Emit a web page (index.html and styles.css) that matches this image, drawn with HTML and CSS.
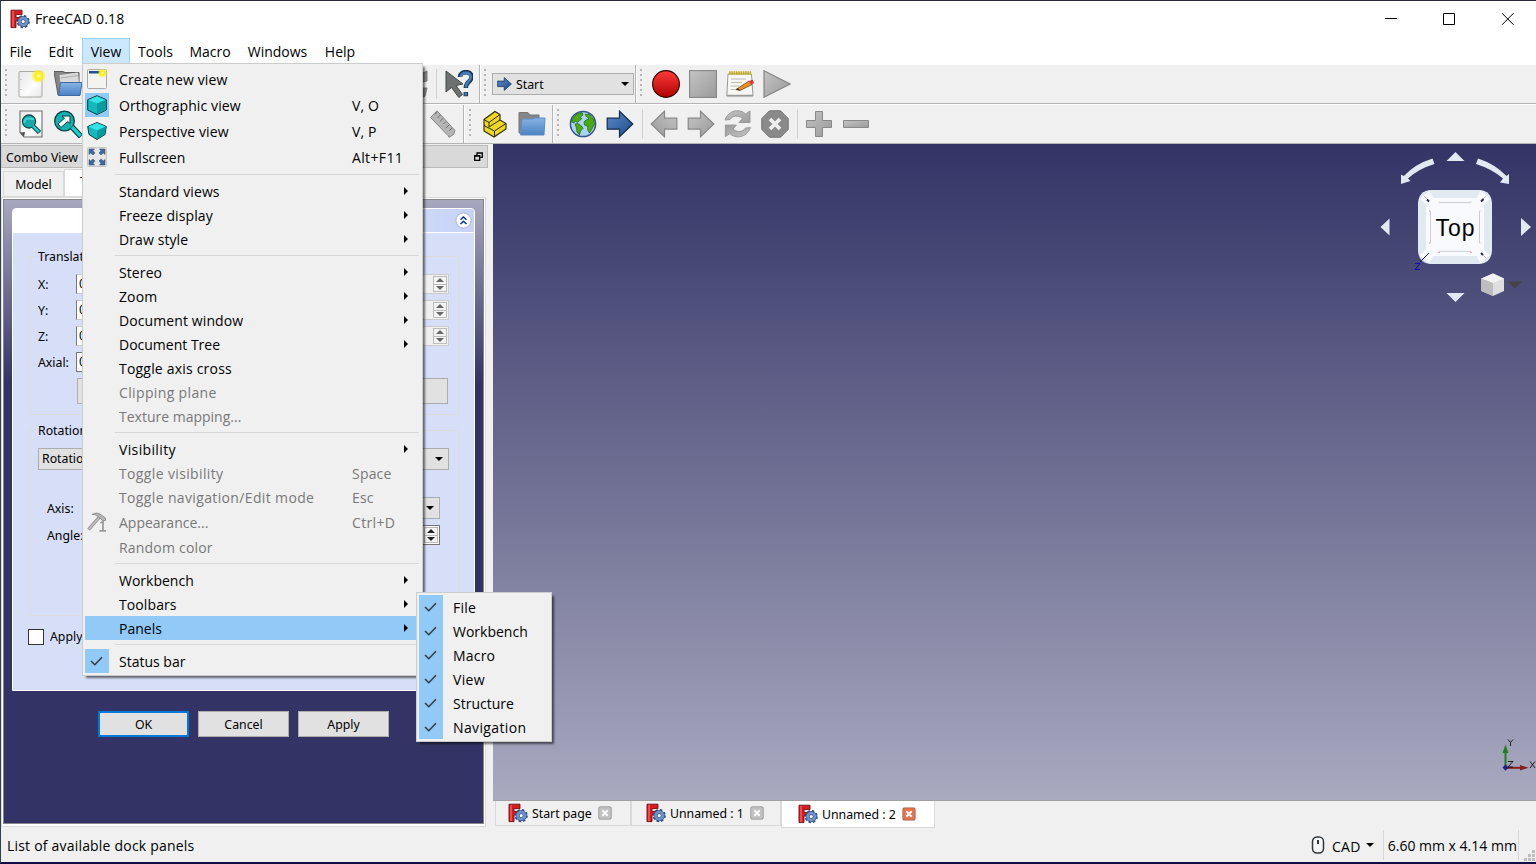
FILE: index.html
```html
<!DOCTYPE html>
<html lang="en">
<head>
<meta charset="utf-8">
<title>FreeCAD 0.18</title>
<link rel="stylesheet" href="styles.css">
</head>
<body>
<svg class="defs" width="0" height="0">
  <defs>
    <linearGradient id="red" x1="0" y1="0" x2="0" y2="1"><stop offset="0" stop-color="#ff3b3b"/><stop offset="1" stop-color="#b00000"/></linearGradient>
    <linearGradient id="grey" x1="0" y1="0" x2="1" y2="1"><stop offset="0" stop-color="#c4c4c4"/><stop offset="1" stop-color="#9a9a9a"/></linearGradient>
    <linearGradient id="blue" x1="0" y1="0" x2="1" y2="1"><stop offset="0" stop-color="#5a8ccb"/><stop offset="1" stop-color="#1d4a87"/></linearGradient>
    <linearGradient id="folder" x1="0" y1="0" x2="0" y2="1"><stop offset="0" stop-color="#87b4e4"/><stop offset="1" stop-color="#4a82c4"/></linearGradient>
    <linearGradient id="paper" x1="0" y1="0" x2="1" y2="1"><stop offset="0" stop-color="#e6e6e6"/><stop offset=".6" stop-color="#fcfcfc"/><stop offset="1" stop-color="#e6e6e6"/></linearGradient>
    <radialGradient id="glow"><stop offset="0" stop-color="#ffffd0"/><stop offset=".35" stop-color="#fcf019"/><stop offset=".6" stop-color="#fcee20" stop-opacity=".85"/><stop offset="1" stop-color="#fcee20" stop-opacity="0"/></radialGradient>
    <symbol id="logo" viewBox="0 0 20 20">
      <path d="M1 1.2H12V5.6H6V8.4H10V12H6V18.6H1Z" fill="#d81c22" stroke="#6a0d10" stroke-width=".9"/>
      <path d="M2 2H4V18H2Z" fill="#f2494c"/>
      <circle cx="13.2" cy="12.6" r="5.4" fill="none" stroke="#2c4a7c" stroke-width="2.4" stroke-dasharray="2.3 1.94"/>
      <circle cx="13.2" cy="12.6" r="3.6" fill="#fff" stroke="#35588f" stroke-width="4"/>
      <circle cx="13.2" cy="12.6" r="3.6" fill="none" stroke="#6d94cc" stroke-width="2.6"/>
    </symbol>
    <symbol id="check" viewBox="0 0 24 24"><path d="M6 12 9.8 15.8 17 8.3" fill="none" stroke="#333b43" stroke-width="1.5"/></symbol>
    <symbol id="close" viewBox="0 0 14 14"><rect x=".7" y=".7" width="12.6" height="12.6" rx="1.5" fill="currentColor" stroke="#000" stroke-opacity=".25"/><path d="M4.3 4.3 9.7 9.7M9.7 4.3 4.3 9.7" stroke="#fff" stroke-width="2"/></symbol>
    <symbol id="arrow" viewBox="0 0 28 28"><path d="M1.2 8.2H13.5V1.2L26.8 14 13.5 26.8V19.2H1.2Z"/></symbol>
  </defs>
</svg>

<div class="window">
  <header class="titlebar">
    <svg class="app-icon" width="20" height="20"><use href="#logo"/></svg>
    <span class="app-title">FreeCAD 0.18</span>
    <svg class="win-controls" width="136" height="20" viewBox="0 0 136 20" fill="none" stroke="#000" stroke-width="1"><path d="M3 9.5H15"/><path d="M61.5 4.5H72.5V15.5H61.5Z"/><path d="M120 4.2 131.6 15.8M131.6 4.2 120 15.8"/></svg>
  </header>

  <nav class="menubar">
    <span class="mb mb-file">File</span><span class="mb mb-edit">Edit</span><span class="mb mb-view open">View</span><span class="mb mb-tools">Tools</span><span class="mb mb-macro">Macro</span><span class="mb mb-windows">Windows</span><span class="mb mb-help">Help</span>
  </nav>

  <div class="toolbar">
    <section class="tb tb-file">
      <i class="handle"></i>
      <svg class="tool" viewBox="0 0 28 28"><rect x="2" y="1.5" width="23" height="25.5" rx="1" fill="url(#paper)" stroke="#aaa9a4"/><path d="M4 9v1M4 19v1" stroke="#999"/><circle cx="21.5" cy="6" r="7.5" fill="url(#glow)"/></svg>
      <svg class="tool" viewBox="0 0 28 28"><path d="M0 1.5H9L11 2.500H25V20L6 25H4Z" fill="#868686" stroke="#5d5d5d"/><path d="M5.500 5 24 2.500 25 14 7 18Z" fill="#dadada"/><path d="M7 8 24 5.500" stroke="#aaa"/><path d="M6.500 12.500H28L26 25.500H4.500Z" fill="url(#folder)" stroke="#3c6ba5"/></svg>
      <span class="grow"></span>
      <svg class="tool refresh-edge" viewBox="0 0 28 28"><path d="M23 3 27 1V11L22 12ZM22 18H27L25 26 22 28Z" fill="#909090" stroke="#777"/></svg>
      <i class="sep"></i>
      <svg class="tool" viewBox="0 0 28 28"><path d="M1 1V22L6.500 17.500 13.800 27.500 17.500 24.500 11 15.500 18 14Z" fill="#6d7270" stroke="#444947"/><path d="M15 7C15 .5 27 .5 26.500 7 26.300 12 21 11.500 20.800 18M20.800 22V26.300" fill="none" stroke="#173453" stroke-width="4.500"/><path d="M15.600 7C16 1.500 26 1.500 25.800 7 25.500 11.500 21 11.500 20.800 17.500M20.800 22.600V25.600" fill="none" stroke="#477bb5" stroke-width="2.600"/></svg>
    </section>
    <section class="tb tb-bench">
      <i class="handle"></i>
      <div class="bench"><svg width="15" height="14" viewBox="0 0 28 28" preserveAspectRatio="none" fill="url(#blue)" stroke="#173453" stroke-width="1.5"><use href="#arrow"/></svg><span>Start</span><i class="down"></i></div>
    </section>
    <section class="tb tb-macro">
      <i class="handle"></i>
      <svg class="tool" viewBox="0 0 28 28"><circle cx="14" cy="14" r="13.4" fill="url(#red)" stroke="#280000" stroke-width="1.1"/></svg>
      <svg class="tool" viewBox="0 0 28 28"><rect x=".6" y=".6" width="26.8" height="26.8" fill="url(#grey)" stroke="#858585" stroke-width="1.1"/></svg>
      <svg class="tool" viewBox="0 0 28 28"><path d="M2 4H25.5L27 26H.8Z" fill="#f7f7f5" stroke="#999"/><path d="M1 25.5H27" stroke="#999" stroke-width="1.500"/><path d="M3 3H25" stroke="#c6a912" stroke-width="3.500" stroke-dasharray="1.6 .7"/><path d="M5 9H20M5 12.500H16M4.500 16H13M4.500 19.500H11" stroke="#bbb"/><path d="M10 19.500 23 11 26 14.500 14 20.500Z" fill="#e8912c" stroke="#78400c" stroke-width=".8"/><path d="M23 11 26.500 9.700 28 13 25.500 14.500Z" fill="#e53030"/><path d="M10 19.500 12 18 14 20.500Z" fill="#333"/></svg>
      <svg class="tool" viewBox="0 0 28 28"><path d="M1 .8V27.2L27 14Z" fill="url(#grey)" stroke="#858585" stroke-width="1.2"/></svg>
    </section>
  </div>

  <div class="toolbar">
    <section class="tb tb-view">
      <i class="handle"></i>
      <svg class="tool" viewBox="0 0 28 28"><path d="M3 1H25V27H7L3 22.5Z" fill="url(#paper)" stroke="#70736f" stroke-width="1.100"/><path d="M3 22.500 8 22 7 27Z" fill="#555"/><path d="M16 16 22.500 22.500" stroke="#042a2a" stroke-width="4.500"/><circle cx="12" cy="11.500" r="6.600" fill="#16a9ab" stroke="#063d3e" stroke-width="1.100"/><path d="M16 16 22 22" stroke="#16d0d2" stroke-width="2.600"/><path d="M7 13C9 5 14 10 17 9" stroke="#6ff" opacity=".5" fill="none" stroke-width="2"/></svg>
      <svg class="tool" viewBox="0 0 28 28"><path d="M18 17 27 26.500" stroke="#042a2a" stroke-width="5.500"/><circle cx="10.500" cy="11" r="9.800" fill="#16b0b2" stroke="#063d3e" stroke-width="1.300"/><path d="M18 17 26.600 26" stroke="#16d0d2" stroke-width="3.500"/><path d="M4 14 10.500 8.200 8 6H16V13.500L13.600 11.500 7 17.500Z" fill="#f4ffff" stroke="#063d3e"/></svg>
      <span class="grow"></span>
      <svg class="tool ruler" viewBox="0 0 28 28"><path d="M1.500 7.500 8 .8 26 20.500 24.500 24.500 20 27.300 19 25.500Z" fill="#b5b5b5" stroke="#858585"/><path d="M8.200 2 5.800 4.500M11.200 5.200 8.500 8M14 8.500 10.800 11.500M17 11.500 14.500 14M20 15 16.800 18M23 18 20 21" stroke="#6f6f6f"/></svg>
    </section>
    <section class="tb tb-part">
      <i class="handle"></i>
      <svg class="tool" viewBox="0 0 28 28"><path d="M3 9.500 14 1.500 19 4.500V10L25 13.500V19L13 27 3 21Z" fill="#ecd721" stroke="#2d2800" stroke-width="1.100"/><path d="M3 9.500 8 12.500 19 4.500M8 12.500V17M3 15.500 13.500 21 25 13.500M13.500 21V27M8 17 19 10" fill="none" stroke="#2d2800" stroke-width="1"/></svg>
      <svg class="tool" viewBox="0 0 28 28"><path d="M1 2.500H10L12 5H21V23H1Z" fill="#858585" stroke="#777"/><path d="M4 9H15L17 8H27L26 25H2.500Z" fill="url(#folder)" stroke="#5c8cc9"/></svg>
    </section>
    <section class="tb tb-nav">
      <i class="handle"></i>
      <svg class="tool" viewBox="0 0 28 28"><circle cx="14" cy="14" r="12.600" fill="#a9d2fb" stroke="#34558b" stroke-width="1.500"/><path d="M4 8 8 4 13 2.500 14 5 11.500 7 12.500 9 10 11 8.500 12.500 6 11 5 13 2.500 12ZM6 14 9 13.500 13 16.500 14 18.500 11.500 21 10.500 25 8 22 7.500 18ZM16 4.500 20 4 24.500 9 25.500 14 23.500 18 20.500 23 18.500 19.500 19 16.500 15.500 15 15 12 17 10 20 9 18 7Z" fill="#4aab12" stroke="#246205" stroke-width=".7"/></svg>
      <svg class="tool" viewBox="0 0 28 28" fill="url(#blue)" stroke="#122c4a" stroke-width="1.2"><use href="#arrow"/></svg>
      <i class="sep"></i>
      <svg class="tool" viewBox="0 0 28 28" fill="url(#grey)" stroke="#888" stroke-width="1.2"><g transform="translate(28 0) scale(-1 1)"><use href="#arrow" width="28" height="28"/></g></svg>
      <svg class="tool" viewBox="0 0 28 28" fill="url(#grey)" stroke="#888" stroke-width="1.2"><use href="#arrow"/></svg>
      <svg class="tool" viewBox="0 0 28 28"><path id="rl" d="M1 10C5-1 17-1 21.500 4L26 1V12.500H15L18.500 8.500C14 4.500 8 6 6 9.500Z" fill="url(#grey)" stroke="#999"/><use href="#rl" transform="rotate(180 13.7 13.8)"/></svg>
      <svg class="tool" viewBox="0 0 28 28"><path d="M8.500.8H19.500L27.200 8.500V19.500L19.500 27.200H8.500L.8 19.500V8.500Z" fill="#8a8a8a" stroke="#737373"/><path d="M9 9 19 19M19 9 9 19" stroke="#eee" stroke-width="3.800"/></svg>
      <i class="sep"></i>
      <svg class="tool" viewBox="0 0 28 28"><path d="M10.500 1.500H17.500V10.500H26.500V17.500H17.500V26.500H10.500V17.500H1.500V10.500H10.500Z" fill="url(#grey)" stroke="#888"/></svg>
      <svg class="tool" viewBox="0 0 28 28"><path d="M1.500 10.500H26.500V17.500H1.500Z" fill="url(#grey)" stroke="#888"/></svg>
    </section>
  </div>

  <main class="main">
    <aside class="dock">
      <div class="dock-title"><span>Combo View</span><svg width="9" height="9" viewBox="0 0 9 9"><path d="M3 3V.8H8.300V5.300H6M3 1H8.500M.7 3.600H5.700V8.300H.7ZM.5 4.200H6" fill="none" stroke="#000" stroke-width="1.300"/></svg></div>
      <div class="dock-tabs"><span class="dtab">Model</span><span class="dtab active">Tasks</span></div>
      <div class="pane">
        <div class="task">
          <div class="task-head"><svg width="17" height="17" viewBox="0 0 17 17"><circle cx="8.500" cy="8.500" r="7.600" fill="#fff" stroke="#aab3d2"/><path d="M5.500 7.800 8.500 5 11.500 7.800M5.500 12 8.500 9.200 11.500 12" fill="none" stroke="#00339a" stroke-width="1.500"/></svg></div>
          <div class="task-body">
            <div class="frame translation">
              <span class="legend">Translat</span>
              <div class="row"><label>X:</label><span class="spin off">0<i></i></span></div>
              <div class="row"><label>Y:</label><span class="spin off">0<i></i></span></div>
              <div class="row"><label>Z:</label><span class="spin off">0<i></i></span></div>
              <div class="row"><label>Axial:</label><span class="spin short">0</span></div>
              <div class="wide-btn"></div>
            </div>
            <div class="frame rotation">
              <span class="legend">Rotation</span>
              <div class="combo method">Rotatio<i class="down"></i></div>
              <div class="row axis"><label>Axis:</label><span class="combo"><i class="down"></i></span></div>
              <div class="row angle"><label>Angle:</label><span class="spin"><i></i></span></div>
            </div>
            <div class="apply-row"><span class="checkbox"></span>Apply</div>
          </div>
        </div>
        <div class="buttons"><span class="btn ok">OK</span><span class="btn">Cancel</span><span class="btn">Apply</span></div>
      </div>
    </aside>

    <div class="mdi">
      <div class="viewport">
        <svg class="navcube" width="166" height="166" viewBox="1370 144 166 166">
          <g fill="#e1e9f1">
            <path d="M1446.500 161 1455.500 152 1464.500 161ZM1446.500 293 1455.500 302 1464.500 293ZM1389.500 218.500V235.500L1380.500 227ZM1521 218V236L1531 227Z"/>
            <path d="M1432.500 158.500 1434.500 164Q1418 169 1408 178.500L1410.500 181 1401 184 1401 174.500 1403.800 176Q1415 164 1432.500 158.500Z"/>
            <path d="M1478 158.500 1476 164Q1492 169 1503 178.500L1500 182.500 1509 184 1509 174 1506.500 176Q1495 164 1478 158.500Z"/>
            <path d="M1430 190H1480Q1491 191 1492 203V251Q1491 263 1480 264H1430Q1419 263 1418 251V203Q1419 191 1430 190Z"/>
          </g>
          <path d="M1432 198H1479L1484 204V250L1479 256H1432L1426 250V204Z" fill="#f8fafd"/>
          <path d="M1420 199 1429 190.500 1433 197 1426 204ZM1490 199 1481 190.500 1477 197 1484 204ZM1420 255 1429 263.500 1433 257 1426 250ZM1490 255 1481 263.500 1477 257 1484 250Z" fill="#fbfcfe"/>
          <path d="M1424 196 1428 200M1486 196 1482 200M1482 254 1486.500 258.500" stroke="#b9b9d0"/>
          <path d="M1427 199.500 1429 201.500M1483.500 199 1481 201.500M1481 253 1483 255" stroke="#2b2b60" stroke-width="2"/>
          <path d="M1439 201.500V202.500H1471V201.500M1439 252V251.300H1471V252M1429.500 211H1430.500V243H1429.500M1480.500 211H1479.500V243H1480.500" fill="none" stroke="#cbcbd9"/>
          <path d="M1438 252.500H1440M1470 252.500H1472" stroke="#f8aaaa"/><path d="M1429.500 210V212M1429.500 242V244" stroke="#aee5ae"/>
          <path d="M1429 253 1420 262M1415 263.500H1420L1415 269.500H1420" fill="none" stroke="#0e0e9e"/>
          <text x="1455" y="236" class="cube-text" text-anchor="middle" textLength="39">Top</text>
          <path d="M1493 273.500 1504 278.500V291L1493 296 1481.300 291V278.500Z" fill="#dedede"/><path d="M1493 273.500 1504 278.500 1493 283 1481.300 278.500Z" fill="#f2f2f2"/><path d="M1481.300 278.500 1493 283V296L1481.300 291Z" fill="#bdbdbd"/>
          <path d="M1508 281.500H1522L1515 288.500Z" fill="#444"/>
        </svg>
        <svg class="axes" width="46" height="40" viewBox="1490 735 46 40">
          <path d="M1505.500 767V752" stroke="#1d821d" stroke-width="2"/><path d="M1505.500 744.500 1508.500 753H1502.500Z" fill="#1d821d"/>
          <path d="M1506 767.800H1522" stroke="#862020" stroke-width="2"/><path d="M1528.500 767.800 1520 765V770.500Z" fill="#862020"/>
          <path d="M1505.500 764.500 1508.500 767.500 1505.500 770.700 1502.500 767.500Z" fill="#20208a"/>
          <path d="M1508 739.500 1510.500 742.500 1513 739.500M1510.500 742.500V746M1508 761.500H1513L1508 767H1513M1530 761.500 1535 768M1535 761.500 1530 768" fill="none" stroke="#111" stroke-width=".9"/>
        </svg>
      </div>
      <div class="doc-tabs">
        <div class="doc start"><svg width="20" height="20"><use href="#logo"/></svg><span class="dt">Start page</span><svg class="x" width="14" height="14"><use href="#close"/></svg></div>
        <div class="doc one"><svg width="20" height="20"><use href="#logo"/></svg><span class="dt">Unnamed : 1</span><svg class="x" width="14" height="14"><use href="#close"/></svg></div>
        <div class="doc two active"><svg width="20" height="20"><use href="#logo"/></svg><span class="dt">Unnamed : 2</span><svg class="x" width="14" height="14"><use href="#close"/></svg></div>
      </div>
    </div>
  </main>

  <footer class="status">
    <span class="status-msg">List of available dock panels</span>
    <svg width="14" height="18" viewBox="0 0 14 18"><rect x="1.500" y="1" width="11" height="16" rx="4.500" fill="#f6f6f6" stroke="#30363b" stroke-width="1.500"/><path d="M7 4V8" stroke="#30363b" stroke-width="2"/></svg>
    <span class="cad">CAD</span><i class="down"></i>
    <span class="dims">6.60 mm x 4.14 mm</span>
    <svg class="grip" width="12" height="12" viewBox="0 0 12 12" fill="#bdbdbd"><path d="M8 0h3v3H8zM4 4h3v3H4zM8 4h3v3H8zM0 8h3v3H0zM4 8h3v3H4zM8 8h3v3H8z"/></svg>
  </footer>
</div>

<div class="menu view-menu">
  <div class="mi tall"><span class="ic"><svg width="20" height="20" viewBox="0 0 20 20"><rect x=".5" y=".5" width="19" height="19" rx="1" fill="#f3f3ef" stroke="#aaa"/><path d="M2 2H18V4.500H2Z" fill="#234f8f"/><circle cx="15.500" cy="4" r="5" fill="url(#glow)"/></svg></span><span class="lb">Create new view</span></div>
  <div class="mi tall"><span class="ic on"><svg width="20" height="20" viewBox="0 0 20 20"><path d="M10 .7 19.300 4.700V15L10 19.500.7 15V4.700Z" fill="#15b9bc" stroke="#063d40"/><path d="M10 1.200 18.500 4.900 10 8.500 1.500 4.900Z" fill="#34e3e5"/><path d="M10 8.500 19 4.900V15L10 19Z" fill="#0e9b9e"/></svg></span><span class="lb">Orthographic view</span><span class="sc">V, O</span></div>
  <div class="mi tall"><span class="ic"><svg width="20" height="20" viewBox="0 0 20 20"><path d="M10 1.500 19.300 5.500 18 13.500 10 18.500 2 13.500.7 5.500Z" fill="#15b9bc" stroke="#063d40"/><path d="M10 2 18.500 5.600 10 9.500 1.500 5.600Z" fill="#34e3e5"/><path d="M10 9.500 18.800 5.800 17.600 13.300 10 18Z" fill="#0e9b9e"/></svg></span><span class="lb">Perspective view</span><span class="sc">V, P</span></div>
  <div class="mi tall"><span class="ic"><svg width="20" height="20" viewBox="0 0 20 20"><rect x=".5" y=".5" width="19" height="19" rx="1" fill="#e6e6e6" stroke="#c5c5c5"/><g fill="#41699e" stroke="#2a4870" stroke-width=".5"><path id="fa" d="M2 2H7.500L6 3.800 8 6 6 8 3.800 6 2 7.500Z"/><use href="#fa" transform="translate(20 0) scale(-1 1)"/><use href="#fa" transform="translate(0 20) scale(1 -1)"/><use href="#fa" transform="translate(20 20) scale(-1 -1)"/></g></svg></span><span class="lb snug">Fullscreen</span><span class="sc wide">Alt+F11</span></div>
  <hr>
  <div class="mi sub"><span class="lb">Standard views</span></div>
  <div class="mi sub"><span class="lb">Freeze display</span></div>
  <div class="mi sub"><span class="lb">Draw style</span></div>
  <hr>
  <div class="mi sub"><span class="lb">Stereo</span></div>
  <div class="mi sub"><span class="lb">Zoom</span></div>
  <div class="mi sub"><span class="lb">Document window</span></div>
  <div class="mi sub"><span class="lb snug">Document Tree</span></div>
  <div class="mi"><span class="lb mid">Toggle axis cross</span></div>
  <div class="mi off"><span class="lb wide">Clipping plane</span></div>
  <div class="mi off"><span class="lb snug">Texture mapping...</span></div>
  <hr>
  <div class="mi sub"><span class="lb wide">Visibility</span></div>
  <div class="mi off"><span class="lb wide">Toggle visibility</span><span class="sc mid">Space</span></div>
  <div class="mi off"><span class="lb wide">Toggle navigation/Edit mode</span><span class="sc">Esc</span></div>
  <div class="mi tall off"><span class="ic"><svg width="20" height="20" viewBox="0 0 20 20" fill="none"><path d="M1.500 17.500 12.500 5" stroke="#888" stroke-width="3.400"/><path d="M1.800 17.200 12.300 5.300" stroke="#bcbcbc" stroke-width="2"/><path d="M5 2.500Q10-.5 14 2.800L18.500 6V8.500L15.500 8.500 11 4.200Q8 2 5 2.500Z" fill="#b5b5b5" stroke="#858585" stroke-width=".8"/><path d="M13.500 11 16 9.500V18.500M12.500 18.800H19" stroke="#999" stroke-width="1.700"/></svg></span><span class="lb snug">Appearance...</span><span class="sc wide">Ctrl+D</span></div>
  <div class="mi off"><span class="lb mid">Random color</span></div>
  <hr>
  <div class="mi sub"><span class="lb snug">Workbench</span></div>
  <div class="mi sub"><span class="lb">Toolbars</span></div>
  <div class="mi sub hover"><span class="lb snug">Panels</span></div>
  <hr>
  <div class="mi"><span class="ic on"><svg width="24" height="24"><use href="#check"/></svg></span><span class="lb snug">Status bar</span></div>
</div>

<div class="menu panels-menu">
  <div class="mi"><span class="ic on"><svg width="24" height="24"><use href="#check"/></svg></span><span class="lb mid">File</span></div>
  <div class="mi"><span class="ic on"><svg width="24" height="24"><use href="#check"/></svg></span><span class="lb snug">Workbench</span></div>
  <div class="mi"><span class="ic on"><svg width="24" height="24"><use href="#check"/></svg></span><span class="lb mid">Macro</span></div>
  <div class="mi"><span class="ic on"><svg width="24" height="24"><use href="#check"/></svg></span><span class="lb wide">View</span></div>
  <div class="mi"><span class="ic on"><svg width="24" height="24"><use href="#check"/></svg></span><span class="lb snug">Structure</span></div>
  <div class="mi"><span class="ic on"><svg width="24" height="24"><use href="#check"/></svg></span><span class="lb wide">Navigation</span></div>
</div>
</body>
</html>
```
FILE: styles.css
```css
* { box-sizing: border-box; }
body { margin: 0; width: 1536px; height: 864px; overflow: hidden; position: relative; font-family: "Open Sans", "Noto Sans", sans-serif; font-size: 14px; color: #000; white-space: nowrap; }
svg { display: block; flex: none; }
.defs { position: absolute; }
.window { width: 1536px; height: 864px; background: #f0f0f0; border-left: 1px solid #2f4052; border-top: 1px solid #2b2a36; border-bottom: 2px solid #130c42; display: flex; flex-direction: column; }

.titlebar { height: 37px; background: #fff; display: flex; align-items: center; padding: 0 18px 2px 9px; }
.app-title { margin-left: 5px; font-size: 14px; letter-spacing: .12px; }
.win-controls { margin-left: auto; }
.menubar { height: 26px; background: #fff; display: flex; line-height: 28px; }
.mb { height: 26px; text-align: center; }
.mb-file { width: 39px; }
.mb-edit { width: 42px; }
.mb-view { width: 48px; }
.mb-tools { width: 51px; }
.mb-macro { width: 58px; }
.mb-windows { width: 77px; }
.mb-help { width: 48px; }
.open { background: #cce8ff; border: 1px solid #99d1ff; line-height: 26px; }

.toolbar { height: 40px; flex: none; display: flex; border-top: 1px solid #fdfdfd; border-bottom: 1px solid #b4b4b4; }
.tb { display: flex; align-items: center; gap: 9px; border-right: 1px solid #b4b4b4; border-left: 1px solid #fff; }
.tb:last-child { border-right: 0; }
.tool { width: 28px; height: 28px; }
.handle { width: 3px; height: 30px; flex: none; background: radial-gradient(circle at 1px 1px, #b5b5b5 1.1px, transparent 1.2px) 0 0 / 3px 5px; }
.sep { width: 1px; height: 30px; background: #d0d0d0; margin: 0 -1px; }
.tb-nav .sep { margin: 0 -2px 0 -1px; }
.grow { flex: 1; }
.tb-file { width: 479px; padding: 0 6px 0 3px; }
.tb-bench { width: 156px; padding: 0 1px 0 3px; gap: 5px; }
.tb-macro { padding-left: 3px; }
.tb-view { width: 463px; padding: 0 6px 0 3px; }
.tb-part { width: 89px; padding-left: 4px; gap: 9px; }
.tb-nav { padding-left: 3px; }
.bench { width: 142px; height: 22px; border: 1px solid #adadad; background: #e1e1e1; display: flex; align-items: center; padding: 0 4px; font: 12.3px/20px "Noto Sans", sans-serif; }
.bench span { margin: 1px 0 0 4px; }
.down { width: 0; height: 0; border: 4px solid transparent; border-top-color: #000; border-bottom: 0; margin-left: auto; flex: none; }

.main { flex: 1; min-height: 0; display: flex; font: 12.3px/20px "Noto Sans", sans-serif; }
.dock { width: 492px; padding: 1px 5px 0 0; }
.dock-title { height: 23px; background: #d9d9d9; border: 1px solid #b9b9b9; border-left-color: #ccc; display: flex; align-items: center; justify-content: space-between; padding: 0 4px; }
.dock-title span { margin-top: 2px; }
.dock-tabs { display: flex; align-items: flex-end; height: 29px; padding-left: 2px; }
.dtab { width: 61px; height: 26px; border: 1px solid #d9d9d9; background: #f0f0f0; text-align: center; line-height: 26px; }
.dtab.active { width: 66px; height: 28px; background: #fff; line-height: 23px; text-align: left; padding-left: 15px; }
.pane { width: 485px; height: 630px; border: 1px solid #dcdcdc; background: linear-gradient(#a9a9c0, #333366 185px); padding: 10px; box-shadow: inset 0 0 0 1px #fff, inset 0 -2px 0 #fff, inset 0 0 0 2px #85858d, inset 0 -3px 0 #85858d; }
.task { width: 463px; height: 483px; border: 1px solid #fff; border-radius: 4px 4px 0 0; background: #d6dff7; }
.task-head { height: 24px; border-bottom: 1px solid #fff; border-radius: 3px 3px 0 0; background: linear-gradient(90deg, #fff, #fff 12%, #c6d3f7); display: flex; align-items: center; justify-content: flex-end; padding-right: 2px; }
.task-body { padding: 23px 15px 0; }
.frame { border: 1px solid #dcdcdc; width: 431px; padding: 0 9px; }
.translation { height: 159px; }
.legend { display: block; width: max-content; height: 18px; line-height: 18px; margin: -9px 0 0 -1px; padding: 0 1px; background: #d6dff7; }
.row { display: flex; height: 20px; margin-bottom: 6px; line-height: 22px; }
.translation .legend + .row { margin-top: 8px; }
.row label { width: 38px; flex: none; }
.spin, .combo { display: flex; align-items: center; border: 1px solid #777; background: #fff; padding-left: 2px; }
.spin { flex: 1; height: 20px; }
.spin.off { border-color: #ccc; border-left-color: #777; background: linear-gradient(90deg, #fff 30%, #f0f0f0 70%); }
.spin.short { flex: none; width: 200px; }
.spin i { margin-left: auto; margin-right: 1px; width: 14px; height: 16px; border: 1px solid #bbb; background: linear-gradient(#bbb, #bbb) 0 7px / 12px 1px no-repeat, #f4f4f4; position: relative; }
.spin i::before, .spin i::after { content: ""; position: absolute; left: 2px; border: 4px solid transparent; }
.spin i::before { top: 1px; border-top: 0; border-bottom-color: #222; }
.spin i::after { bottom: 1px; border-bottom: 0; border-top-color: #222; }
.spin.off i::before { border-bottom-color: #666; }
.spin.off i::after { border-top-color: #666; }
.wide-btn { height: 26px; margin: 1px 0 0 39px; width: 371px; border: 1px solid #adadad; background: #e1e1e1; }
.rotation { height: 186px; margin-top: 15px; }
.combo { background: #e1e1e1; border-color: #adadad; height: 22px; padding: 0 5px 0 3px; }
.combo.method { margin-top: 8px; line-height: 22px; }
.axis { margin: 27px 9px 0; height: 22px; line-height: 24px; }
.axis label, .angle label { width: 40px; }
.axis .combo { flex: 1; }
.angle { margin: 6px 9px 0; }
.apply-row { display: flex; align-items: center; gap: 6px; margin-top: 11px; height: 20px; }
.checkbox { width: 16px; height: 16px; border: 1px solid #333; background: #fff; }
.buttons { display: flex; gap: 9px; margin: 20px 0 0 86px; }
.btn { width: 91px; height: 26px; background: #e1e1e1; border: 1px solid #adadad; text-align: center; line-height: 25px; }
.btn.ok { border: 2px solid #0078d7; line-height: 23px; }

.mdi { width: 1043px; }
.viewport { height: 657px; background: linear-gradient(#333366, #a9a9c0); border-bottom: 1px solid #a0a0a0; position: relative; }
.navcube { position: absolute; right: 0; top: 0; }
.axes { position: absolute; right: 0; bottom: 25px; }
.cube-text { font: 23px "Liberation Sans", sans-serif; }
.doc-tabs { display: flex; padding-left: 2px; }
.doc { height: 25px; display: flex; align-items: center; border: 1px solid #d9d9d9; border-top: 0; padding-left: 12px; color: #000; }
.doc .x { color: #c1c1c1; margin-left: 6px; }
.dt { margin: 2px 0 0 4px; }
.start { width: 136px; }
.one { width: 150px; padding-left: 14px; }
.two { width: 154px; padding-left: 16px; }
.doc.active { height: 28px; background: #fff; margin-top: -1px; }
.doc.active .x { color: #e5714c; }

.status { height: 34px; flex: none; display: flex; align-items: center; padding-left: 6px; }
.status-msg { width: 1304px; letter-spacing: .2px; }
.cad { margin: 2px 5px 0 7px; letter-spacing: .3px; }
.status .down { margin: 0; }
.dims { margin-left: 9px; border: solid #d7d7d7; border-width: 0 1px; width: 136px; height: 30px; line-height: 32px; padding-left: 4px; }
.grip { align-self: flex-end; margin-left: 5px; }

.menu { position: absolute; background: #f0f0f0; border: 1px solid #ccc; padding: 2px; box-shadow: 3px 3px 2px -1px rgba(0, 0, 0, .55); letter-spacing: .1px; }
.view-menu { left: 82px; top: 63px; width: 341px; height: 613px; }
.panels-menu { left: 416px; top: 592px; width: 136px; height: 150px; }
.mi { height: 24px; display: flex; align-items: center; line-height: 22px; padding-left: 34px; }
.tall { height: 26px; }
.ic { width: 24px; height: 24px; margin: 0 10px 0 -34px; display: flex; align-items: center; justify-content: center; flex: none; }
.ic.on { background: #91c9f7; }
.lb { width: 233px; flex: none; padding-top: 2px; }
.sc { padding-top: 2px; }
.snug { letter-spacing: 0; }
.mid { letter-spacing: .2px; }
.wide { letter-spacing: .36px; }
.panels-menu .lb { width: 90px; }
.mi.off { color: #787878; }
.sub::after { content: ""; margin-left: 52px; border: 4px solid transparent; border-left-color: #000; border-right: 0; }
.hover { background: #91c9f7; }
.menu hr { height: 1px; border: 0; margin: 4px 1px 4px 30px; background: #d7d7d7; }
```
